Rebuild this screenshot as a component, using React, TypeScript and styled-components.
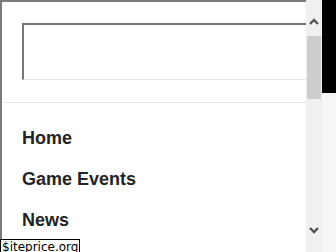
import styled, { createGlobalStyle } from "styled-components";

const GlobalStyle = createGlobalStyle`
  html, body {
    margin: 0;
    padding: 0;
    background: #ffffff;
  }
  body {
    font-family: "Liberation Sans", Arial, sans-serif;
  }
`;

const Screen = styled.div`
  position: relative;
  width: 336px;
  height: 252px;
  display: flex;
  overflow: hidden;
  background: #ffffff;
`;

const Drawer = styled.div`
  width: 304px;
  border-left: 2px solid #7b7b7b;
  border-top: 2px solid #7b7b7b;
  display: flex;
  flex-direction: column;
  overflow: hidden;
`;

const SearchRow = styled.div`
  padding: 21px 0 0 20px;
  display: flex;
`;

const SearchBox = styled.input`
  flex: 1;
  height: 57px;
  box-sizing: border-box;
  margin: 0;
  padding: 0;
  border-top: 2px solid #767676;
  border-left: 2px solid #767676;
  border-bottom: 1px solid #e2e2e2;
  border-right: none;
  background: #ffffff;
  outline: none;
`;

const Divider = styled.div`
  margin-top: 22px;
  height: 1px;
  background: #e8e8e8;
`;

const NavList = styled.nav`
  padding: 15px 0 0 20px;
  display: flex;
  flex-direction: column;
`;

const NavLink = styled.a`
  font-family: "Liberation Sans", Arial, sans-serif;
  font-weight: bold;
  font-size: 18px;
  line-height: 41px;
  color: #232323;
  text-decoration: none;
`;

const ScrollTrack = styled.div`
  width: 16px;
  background: #f0f0f0;
  display: flex;
  flex-direction: column;
`;

const ArrowButton = styled.div<{ $pad: number }>`
  display: flex;
  justify-content: center;
  padding-top: ${(p) => p.$pad}px;
  height: 36px;
  box-sizing: border-box;
`;

const Thumb = styled.div`
  height: 63px;
  margin: 0 1px 0 1px;
  background: #cdcdcd;
`;

const TrackFill = styled.div`
  flex: 1;
  display: flex;
  flex-direction: column;
  justify-content: flex-end;
  align-items: center;
  padding-bottom: 18px;
`;

const SideStrip = styled.div`
  width: 14px;
  display: flex;
  flex-direction: column;
`;

const StripBlack = styled.div`
  height: 93px;
  background: #000000;
`;

const StripLight = styled.div`
  flex: 1;
  background: #f6f6f6;
`;

const Watermark = styled.div`
  position: absolute;
  left: 0;
  top: 239px;
  height: 14px;
  border: 1px solid #000000;
  background: #ffffff;
  font-family: "DejaVu Sans", Verdana, sans-serif;
  font-size: 12px;
  line-height: 14px;
  color: #000000;
  padding: 0 1px;
  white-space: nowrap;
`;

const Chevron = ({ up }: { up?: boolean }) => (
  <svg width="10" height="7" viewBox="0 0 10 7">
    <polyline
      points={up ? "1,6 5,2 9,6" : "1,1 5,5 9,1"}
      fill="none"
      stroke="#545454"
      strokeWidth="2.4"
    />
  </svg>
);

const links = ["Home", "Game Events", "News"];

export default function App() {
  return (
    <>
      <GlobalStyle />
      <Screen>
        <Drawer>
          <SearchRow>
            <SearchBox type="text" aria-label="Search" />
          </SearchRow>
          <Divider />
          <NavList>
            {links.map((l) => (
              <NavLink key={l} href="#">
                {l}
              </NavLink>
            ))}
          </NavList>
        </Drawer>
        <ScrollTrack>
          <ArrowButton $pad={18}>
            <Chevron up />
          </ArrowButton>
          <Thumb />
          <TrackFill>
            <Chevron />
          </TrackFill>
        </ScrollTrack>
        <SideStrip>
          <StripBlack />
          <StripLight />
        </SideStrip>
        <Watermark>$iteprice.org</Watermark>
      </Screen>
    </>
  );
}
